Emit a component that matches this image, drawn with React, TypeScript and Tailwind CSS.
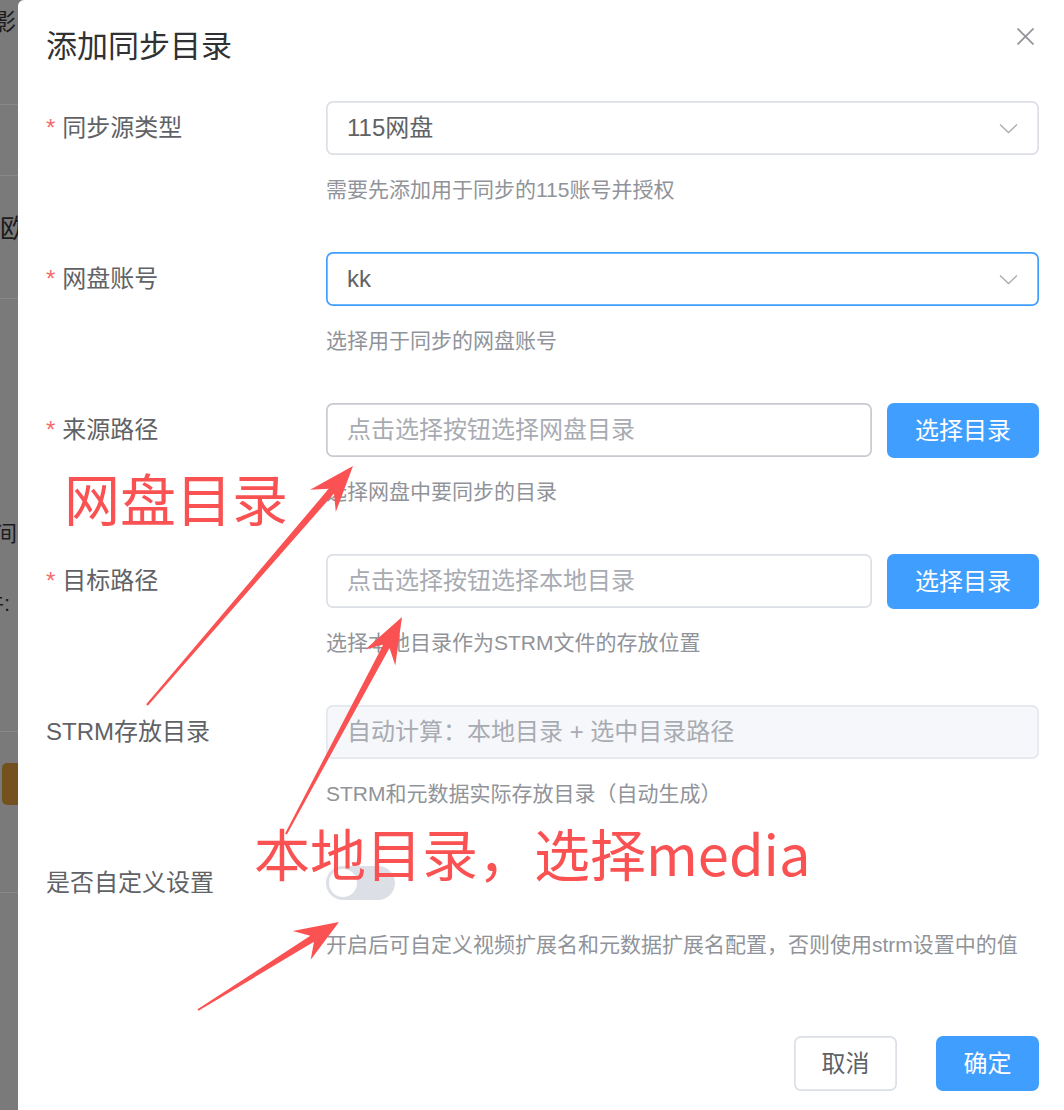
import React from "react";

const FONT = "font-['Liberation_Sans','Noto_Sans_CJK_SC',sans-serif]";

function arrowPts(tx: number, ty: number, px: number, py: number, hl: number, hw: number, sw: number, tw: number) {
  const dx = px - tx, dy = py - ty;
  const L = Math.hypot(dx, dy);
  const ux = dx / L, uy = dy / L;
  const nx = -uy, ny = ux;
  const bx = px - ux * hl, by = py - uy * hl;
  const kx = px - ux * hl * 0.72, ky = py - uy * hl * 0.72;
  const pts: [number, number][] = [
    [px, py],
    [bx + nx * hw, by + ny * hw],
    [kx + nx * sw, ky + ny * sw],
    [tx + nx * tw, ty + ny * tw],
    [tx - nx * tw, ty - ny * tw],
    [kx - nx * sw, ky - ny * sw],
    [bx - nx * hw, by - ny * hw],
  ];
  return pts.map((p) => `${p[0].toFixed(1)},${p[1].toFixed(1)}`).join(" ");
}

function Chevron() {
  return (
    <svg width="19" height="11" viewBox="0 0 19 11" className="shrink-0">
      <polyline points="1,1.5 9.5,9.5 18,1.5" fill="none" stroke="#a8abb2" strokeWidth="1.3" />
    </svg>
  );
}

function Row({
  label,
  required,
  hint,
  children,
  last,
}: {
  label: string;
  required?: boolean;
  hint: string;
  children: React.ReactNode;
  last?: boolean;
}) {
  return (
    <div className={last ? "flex" : "flex mb-[50px]"}>
      <div className="w-[280px] shrink-0 h-[54px] flex items-center text-[24px] text-[#606266] whitespace-nowrap">
        {required && <span className="text-[#f56c6c] mr-[7px]">*</span>}
        {label}
      </div>
      <div className="flex-1 min-w-0">
        <div className="h-[54px]">{children}</div>
        <div className="mt-[23px] leading-[24px] text-[21px] text-[#909399] whitespace-nowrap">{hint}</div>
      </div>
    </div>
  );
}

function SelectBox({ value, focused }: { value: string; focused?: boolean }) {
  return (
    <div
      className={
        "h-[54px] rounded-[7px] flex items-center justify-between pl-[21px] pr-[21px] text-[24px] text-[#606266] bg-white " +
        (focused ? "shadow-[inset_0_0_0_1.7px_#409eff]" : "shadow-[inset_0_0_0_1.7px_#dcdfe6]")
      }
    >
      <span>{value}</span>
      <Chevron />
    </div>
  );
}

function PathInput({ placeholder, dark }: { placeholder: string; dark?: boolean }) {
  return (
    <div className="flex gap-[15px] h-[54px]">
      <div
        className={
          "flex-1 h-[54px] rounded-[7px] flex items-center pl-[21px] text-[24px] text-[#a8abb2] bg-white " +
          (dark ? "shadow-[inset_0_0_0_1.7px_#c8cad1]" : "shadow-[inset_0_0_0_1.7px_#dcdfe6]")
        }
      >
        {placeholder}
      </div>
      <div className="w-[152px] h-[55px] rounded-[7px] bg-[#409eff] text-white text-[24px] flex items-center justify-center">
        选择目录
      </div>
    </div>
  );
}

export default function App() {
  const red = "#fa5252";
  return (
    <div className={"relative flex w-[1064px] h-[1110px] overflow-hidden bg-[#7a7a7a] " + FONT}>
      {/* background page peeking out under the overlay */}
      <div className="w-[18px] shrink-0 overflow-hidden flex flex-col text-[#1c1c1c]">
        <div className="h-[104px] pt-[8px]">
          <div className="-ml-[7px] text-[23px] leading-[28px] whitespace-nowrap">影</div>
        </div>
        <div className="h-px bg-[#888888]" />
        <div className="h-[70px]" />
        <div className="h-px bg-[#888888]" />
        <div className="h-[122px] pt-[38px]">
          <div className="text-[26px] leading-[30px] whitespace-nowrap">欧</div>
        </div>
        <div className="h-px bg-[#888888]" />
        <div className="h-[432px] pt-[220px]">
          <div className="-ml-[5px] text-[22px] leading-[30px] whitespace-nowrap">间</div>
          <div className="-ml-[18px] mt-[40px] text-[22px] leading-[30px] whitespace-nowrap">件:</div>
        </div>
        <div className="h-px bg-[#888888]" />
        <div className="h-[31px]" />
        <div className="h-[42px] ml-[2px] rounded-l-[5px] bg-[#73521f]" />
        <div className="h-[87px]" />
        <div className="h-px bg-[#888888]" />
      </div>

      {/* dialog */}
      <div className="flex-1 bg-white rounded-tl-[6px] pt-[27px] pl-[28px] pr-[25px] flex flex-col">
        <div className="flex items-start justify-between h-[40px]">
          <div className="text-[31px] leading-[40px] text-[#303133] whitespace-nowrap">添加同步目录</div>
          <svg width="17" height="17" viewBox="0 0 17 17" className="mt-[1px] mr-[5px]">
            <line x1="0.5" y1="0.5" x2="16.5" y2="16.5" stroke="#909399" strokeWidth="1.7" />
            <line x1="16.5" y1="0.5" x2="0.5" y2="16.5" stroke="#909399" strokeWidth="1.7" />
          </svg>
        </div>

        <div className="mt-[34px] flex flex-col">
          <Row label="同步源类型" required hint="需要先添加用于同步的115账号并授权">
            <SelectBox value="115网盘" />
          </Row>
          <Row label="网盘账号" required hint="选择用于同步的网盘账号">
            <SelectBox value="kk" focused />
          </Row>
          <Row label="来源路径" required hint="选择网盘中要同步的目录">
            <PathInput placeholder="点击选择按钮选择网盘目录" dark />
          </Row>
          <Row label="目标路径" required hint="选择本地目录作为STRM文件的存放位置">
            <PathInput placeholder="点击选择按钮选择本地目录" />
          </Row>
          <Row label="STRM存放目录" hint="STRM和元数据实际存放目录（自动生成）">
            <div className="h-[54px] rounded-[7px] flex items-center pl-[21px] text-[24px] text-[#a8abb2] bg-[#f5f7fa] shadow-[inset_0_0_0_1.7px_#e4e7ed]">
              自动计算：本地目录 + 选中目录路径
            </div>
          </Row>
          <Row label="是否自定义设置" hint="开启后可自定义视频扩展名和元数据扩展名配置，否则使用strm设置中的值" last>
            <div className="h-[54px] flex items-center">
              <div className="w-[69px] h-[34px] rounded-full bg-[#dcdfe6] flex items-center pl-[3px]">
                <div className="w-[28px] h-[28px] rounded-full bg-white" />
              </div>
            </div>
          </Row>
        </div>

        <div className="flex justify-end gap-[39px] mt-[79px]">
          <div className="w-[103px] h-[55px] rounded-[7px] bg-white shadow-[inset_0_0_0_1.7px_#dcdfe6] text-[24px] text-[#606266] flex items-center justify-center">
            取消
          </div>
          <div className="w-[103px] h-[55px] rounded-[7px] bg-[#409eff] text-[24px] text-white flex items-center justify-center">
            确定
          </div>
        </div>
      </div>

      {/* annotations */}
      <svg className="absolute inset-0 pointer-events-none" width="1064" height="1110" viewBox="0 0 1064 1110">
        <polygon points={arrowPts(147, 705, 353, 466, 46, 17, 3.5, 1)} fill={red} />
        <polygon points={arrowPts(286, 834, 402, 617, 46, 17, 3.5, 1)} fill={red} />
        <polygon points={arrowPts(198, 1010, 339, 922, 44, 17, 3.5, 1)} fill={red} />
      </svg>
      <div className="absolute left-[64px] top-[469px] text-[56px] leading-[56px] text-[#fa5252] font-['Noto_Sans_CJK_SC',sans-serif] whitespace-nowrap pointer-events-none">
        网盘目录
      </div>
      <div className="absolute left-[254px] top-[824px] text-[56px] leading-[56px] text-[#fa5252] font-['Noto_Sans_CJK_SC',sans-serif] whitespace-nowrap pointer-events-none">
        本地目录，选择media
      </div>
    </div>
  );
}
